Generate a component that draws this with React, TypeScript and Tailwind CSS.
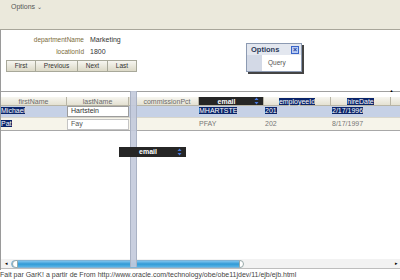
const cols = [
  { key: "firstName", w: "w-[66px]" },
  { key: "lastName", w: "w-[62px]" },
];

function Sel({ children }: { children: React.ReactNode }) {
  return <span className="bg-[#0a246a] text-white">{children}</span>;
}

function SortIcon() {
  return (
    <svg width="5" height="8" viewBox="0 0 5 8" className="shrink-0">
      <path d="M2.5 0.5 L4.5 3 L0.5 3 Z" fill="#4a7ae0" />
      <path d="M2.5 7.5 L4.5 5 L0.5 5 Z" fill="#4a7ae0" />
    </svg>
  );
}

function Head({ w, children, dark }: { w: string; children: React.ReactNode; dark?: boolean }) {
  return (
    <div
      className={`${w} h-full flex items-center justify-center border-r border-[#b8b5a6] ${
        dark ? "bg-[#262626] text-white font-bold" : "bg-gradient-to-b from-[#f7f6f0] to-[#e4e1d2] text-[#6a6a6a]"
      }`}
    >
      {children}
    </div>
  );
}

export default function App() {
  return (
    <div className="relative w-[400px] h-[280px] overflow-hidden bg-white text-[6.5px] text-[#333] [font-family:'Liberation_Sans',Arial,sans-serif]">
      {/* toolbar */}
      <div className="h-[30px] bg-[#ebe9dc] border-b border-[#a8a69a] pl-[11px] pt-[2px] text-[#555]">
        <span className="text-[7px]">Options</span> <span className="text-[6px]">⌄</span>
      </div>

      <div className="relative flex h-[240px] flex-col border-l border-[#9a9a9a]">
        {/* form */}
        <div className="grid grid-cols-[83px_auto] gap-x-[6px] pt-[4px]">
          <div className="h-[12px] leading-[12px] text-right text-[#7a6a3a]">departmentName</div>
          <div className="h-[12px] leading-[12px] text-[7px]">Marketing</div>
          <div className="h-[12px] leading-[12px] text-right text-[#7a6a3a]">locationId</div>
          <div className="h-[12px] leading-[12px] text-[7px]">1800</div>
        </div>
        <div className="ml-[5px] mt-[2px] flex h-[12px] w-[131px] border border-[#a8a89a] text-[#333]">
          {[
            ["First", "w-[29px]"],
            ["Previous", "w-[42px]"],
            ["Next", "w-[30px]"],
            ["Last", "flex-1"],
          ].map(([label, w], i) => (
            <div
              key={label}
              className={`${w} flex items-center justify-center bg-gradient-to-b from-[#f7f6f1] to-[#dcd9c7] ${
                i < 3 ? "border-r border-[#a8a89a]" : ""
              }`}
            >
              {label}
            </div>
          ))}
        </div>

        {/* table */}
        <div className="mt-[19px] flex flex-1 flex-col border-t border-[#a0a0a0] text-[7px]">
          <div className="flex h-[5px] justify-end pr-[4px]">
            <div className="mt-[-4px] flex h-[5px] w-[9px] items-center justify-center text-[4px] leading-none text-black">▲</div>
          </div>
          <div className="flex h-[9px] border-b border-[#b8b5a6] leading-none">
            <Head w={cols[0].w}>firstName</Head>
            <Head w={cols[1].w}>lastName</Head>
            <div className="w-[7px] bg-[#e4e1d2]" />
            <Head w="w-[63px]">commissionPct</Head>
            <Head w="w-[65px]" dark>
              <span className="flex-1 text-center">email</span>
              <span className="pr-[4px]">
                <SortIcon />
              </span>
            </Head>
            <Head w="w-[67px]">
              <Sel>employeeId</Sel>
            </Head>
            <Head w="w-[60px]">
              <Sel>hireDate</Sel>
            </Head>
            <div className="flex-1 bg-gradient-to-b from-[#f7f6f0] to-[#e4e1d2]" />
          </div>

          {/* row 1 */}
          <div className="flex h-[12px] items-center border-b border-[#d8d6cc] bg-[#c6d1e6]">
            <div className="w-[66px]">
              <Sel>Michael</Sel>
            </div>
            <div className="flex h-[11px] w-[62px] items-center border border-[#9c9c9c] bg-white pl-[3px]">Hartstein</div>
            <div className="w-[7px]" />
            <div className="w-[63px]" />
            <div className="w-[65px]">
              <Sel>MHARTSTE</Sel>
            </div>
            <div className="w-[67px] pl-[1px]">
              <Sel>201</Sel>
            </div>
            <div className="w-[60px] pl-[1px]">
              <Sel>2/17/1996</Sel>
            </div>
          </div>

          {/* row 2 */}
          <div className="flex h-[13px] items-center border-b border-[#a8a8a8] bg-[#f6f4ea] text-[#777]">
            <div className="w-[66px]">
              <Sel>Pat</Sel>
            </div>
            <div className="flex h-[11px] w-[62px] items-center border border-[#c4c4c4] bg-white pl-[3px] text-[#555]">Fay</div>
            <div className="w-[7px]" />
            <div className="w-[63px]" />
            <div className="w-[65px]">PFAY</div>
            <div className="w-[67px] pl-[1px]">202</div>
            <div className="w-[60px] pl-[1px]">8/17/1997</div>
          </div>

          <div className="flex-1" />

          {/* horizontal scrollbar */}
          <div className="flex h-[10px] items-center border-b border-[#bdbdbd] bg-[#f2f2f2]">
            <div className="w-[10px] text-center text-[5px] text-black">◂</div>
            <div className="relative h-[8px] w-[232px] rounded-[4px] border border-[#7fb3d6] bg-gradient-to-b from-[#7cc4ee] via-[#2f9ad6] to-[#58b4e6]">
              <div className="absolute left-0 top-[-1px] h-[8px] w-[6px] rounded-l-[4px] border border-[#9aa] bg-white" />
              <div className="absolute right-[-2px] top-[-1px] h-[8px] w-[5px] rounded-r-[4px] border border-[#9aa] bg-white" />
            </div>
            <div className="flex-1" />
            <div className="w-[8px] text-center text-[5px] text-black">▸</div>
          </div>
          <div className="h-[1px]" />
        </div>

        {/* column being dragged */}
        <div className="absolute left-[129px] top-[61px] bottom-[3px] w-[7px] border-x border-[#aab2c4] bg-[#c3cadb]/90" />
        <div className="absolute left-[118px] top-[117px] flex h-[10px] w-[67px] items-center bg-[#262626] text-[7px] font-bold text-white">
          <span className="flex-1 text-center">email</span>
          <span className="pr-[4px]">
            <SortIcon />
          </span>
        </div>

        {/* options popup */}
        <div className="absolute left-[245px] top-[13px] w-[56px] border border-[#8c9ab2] bg-white shadow-[2px_2px_0_#444]">
          <div className="flex h-[11px] items-center justify-between bg-[#e3e7ef] pl-[4px] pr-[2px]">
            <span className="text-[7.5px] font-bold text-[#2c3a58]">Options</span>
            <span className="flex h-[8px] w-[8px] items-center justify-center border border-[#3a64c8] bg-[#b9cdf4] text-[7px] font-bold leading-none text-[#1d3f9a]">
              ×
            </span>
          </div>
          <div className="flex h-[16px]">
            <div className="w-[15px] bg-[#d3d9e6]" />
            <div className="flex items-center pl-[6px] text-[#555]">Query</div>
          </div>
        </div>
      </div>

      <div className="h-[10px] leading-[10px] text-[7px] text-[#444] whitespace-nowrap">
        Fait par GarK! a partir de From http://www.oracle.com/technology/obe/obe11jdev/11/ejb/ejb.html
      </div>
    </div>
  );
}
